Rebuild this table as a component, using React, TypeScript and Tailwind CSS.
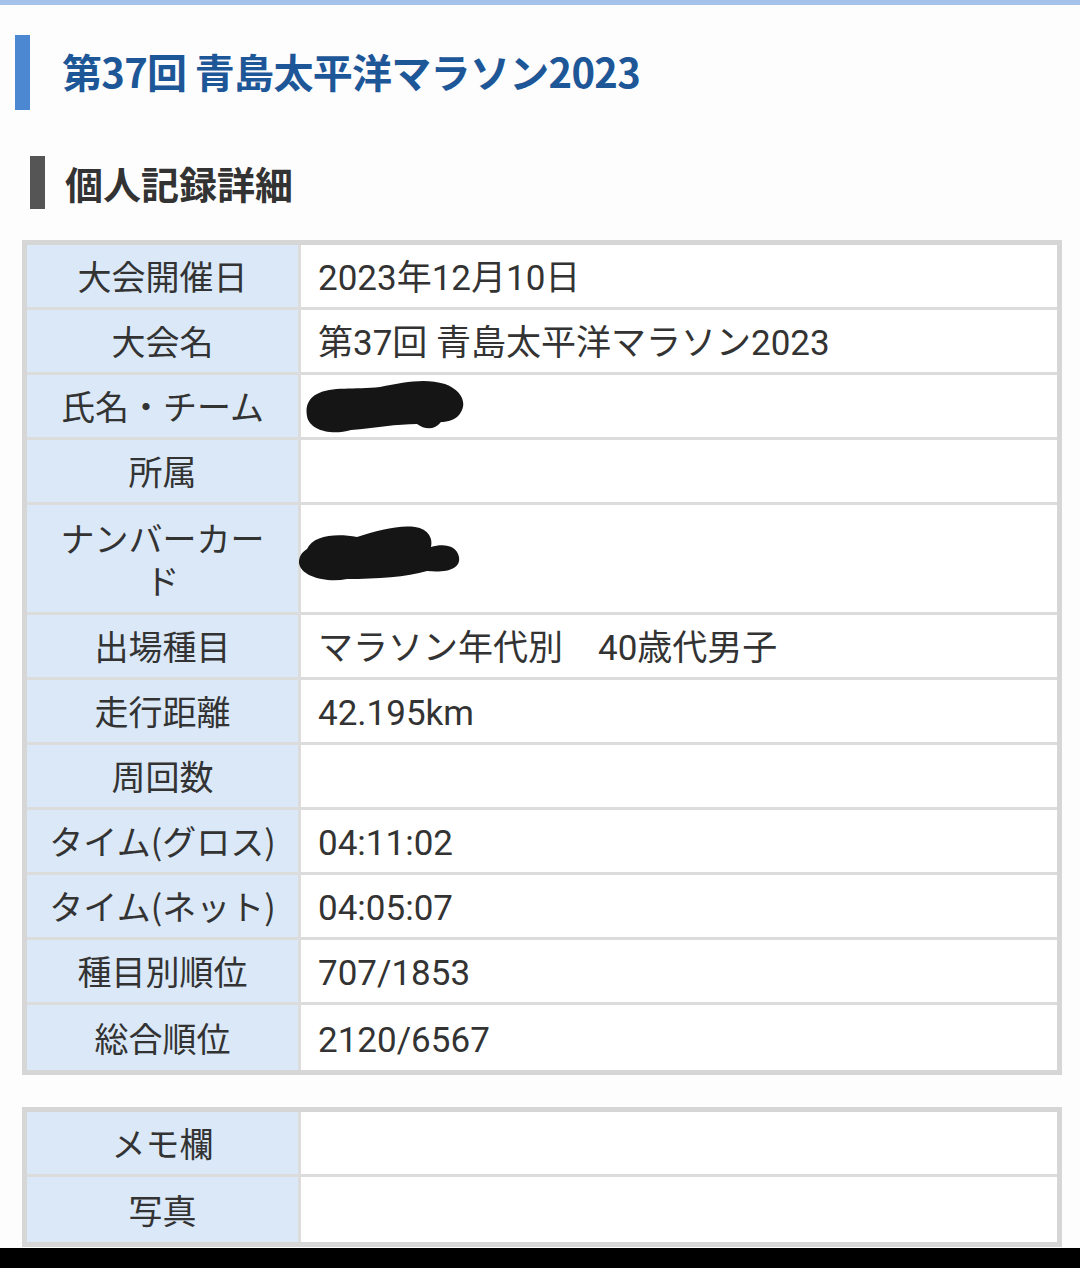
import React from 'react'

const FONT = { fontFamily: '"Noto Sans CJK JP", "Noto Sans", sans-serif' }
const VALUE_FONT = { fontFamily: 'Roboto, "Noto Sans CJK JP", sans-serif' }

type Row = { label: React.ReactNode; value?: React.ReactNode; tall?: boolean }

function Redact({ variant }: { variant: 1 | 2 }) {
  if (variant === 1) {
    return (
      <svg width="162" height="56" viewBox="0 0 162 56" className="block">
        <path
          d="M12 16 C26 8 50 12 75 9 C100 4 120 0 140 6 C156 12 162 24 156 34 C152 42 142 44 136 44 C130 52 120 52 112 46 C92 46 70 50 46 52 C26 58 4 52 2 38 C0 28 4 20 12 16 Z"
          fill="#151515"
        />
      </svg>
    )
  }
  return (
    <svg width="164" height="60" viewBox="0 0 164 60" className="block">
      <path
        d="M10 24 C16 10 40 8 60 12 C80 6 100 0 118 2 C132 4 136 14 134 22 C146 18 160 20 162 32 C164 44 150 48 130 46 C110 52 80 54 50 54 C30 58 4 52 2 38 C2 32 4 28 10 24 Z"
        fill="#151515"
      />
    </svg>
  )
}

function RecordTable({ rows }: { rows: Row[] }) {
  return (
    <div className="ml-[22px] mr-[18px] border-[5px] border-[#d6d6d6] bg-white">
      {rows.map((r, i) => (
        <div
          key={i}
          className={`flex ${i < rows.length - 1 ? 'border-b-[3px] border-[#dcdcdc]' : ''} ${r.tall ? 'h-[110px]' : 'h-[65px]'}`}
        >
          <div className="w-[274px] shrink-0 bg-[#dae8f8] border-r-[3px] border-[#dcdcdc] flex items-center justify-center text-center px-[17px] text-[34px] leading-[42px] text-[#333]">
            {r.label}
          </div>
          <div
            className="flex-1 flex items-center pl-[17px] pt-[6px] text-[35px] leading-[42px] text-[#333]"
            style={VALUE_FONT}
          >
            {r.value}
          </div>
        </div>
      ))}
    </div>
  )
}

export default function App() {
  const rows: Row[] = [
    { label: '大会開催日', value: '2023年12月10日' },
    { label: '大会名', value: '第37回 青島太平洋マラソン2023' },
    {
      label: '氏名・チーム',
      value: (
        <div className="-ml-[13px] -mt-[7px]">
          <Redact variant={1} />
        </div>
      ),
    },
    { label: '所属' },
    {
      label: 'ナンバーカード',
      value: (
        <div className="-ml-[21px] -mt-[14px]">
          <Redact variant={2} />
        </div>
      ),
      tall: true,
    },
    { label: '出場種目', value: 'マラソン年代別　40歳代男子' },
    { label: '走行距離', value: '42.195km' },
    { label: '周回数' },
    { label: 'タイム(グロス)', value: '04:11:02' },
    { label: 'タイム(ネット)', value: '04:05:07' },
    { label: '種目別順位', value: '707/1853' },
    { label: '総合順位', value: '2120/6567' },
  ]

  const extra: Row[] = [{ label: 'メモ欄' }, { label: '写真' }]

  return (
    <div className="w-[1080px] h-[1268px] bg-[#fdfdfd] flex flex-col overflow-hidden" style={FONT}>
      <div className="h-[5px] bg-[#a5c2ea]" />

      {/* event title */}
      <div className="pt-[30px] pl-[15px] flex items-center">
        <div className="w-[15px] h-[75px] bg-[#4b88d1]" />
        <h1 className="ml-[32px] -mt-[3px] text-[40px] leading-none font-bold text-[#1d5798] tracking-[-0.7px]">
          第37回 青島太平洋マラソン2023
        </h1>
      </div>

      {/* section heading */}
      <div className="mt-[46px] pl-[30px] flex items-center">
        <div className="w-[15px] h-[53px] bg-[#555]" />
        <h2 className="ml-[20px] text-[38px] leading-none font-bold text-[#333]">個人記録詳細</h2>
      </div>

      <div className="mt-[31px]">
        <RecordTable rows={rows} />
      </div>

      <div className="mt-[32px]">
        <RecordTable rows={extra} />
      </div>

      <div className="flex-1" />
      <div className="h-[20px] bg-black" />
    </div>
  )
}
